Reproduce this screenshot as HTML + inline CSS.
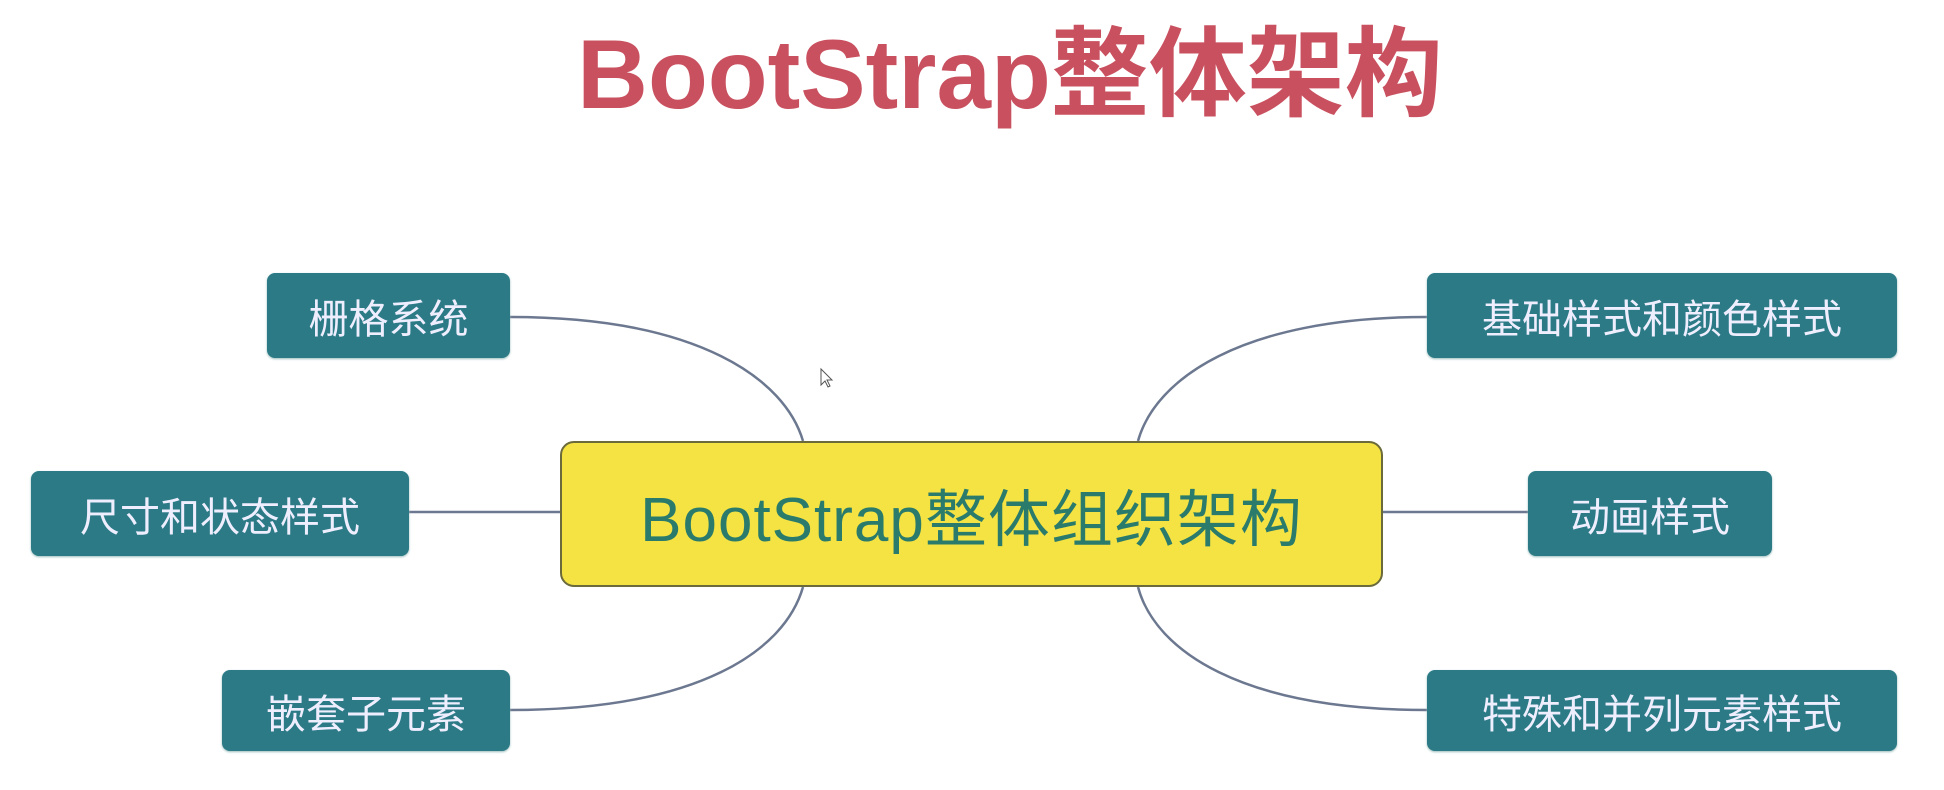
<!DOCTYPE html>
<html><head><meta charset="utf-8"><style>
body{margin:0;width:1944px;height:790px;background:#fff;position:relative;overflow:hidden;font-family:"Liberation Sans","Noto Sans CJK SC",sans-serif}
.t{position:absolute;left:0;width:1944px;top:14px;text-align:center;font-size:98px;font-weight:bold;color:#c9505f;line-height:120px;padding-left:76px;box-sizing:border-box}
.b{position:absolute;background:#2b7a85;color:#eef;border-radius:8px;display:flex;align-items:center;justify-content:center;font-size:40px;box-shadow:0 1px 2px #9bb;font-family:"Noto Sans CJK SC",sans-serif}
.c{position:absolute;left:560px;top:441px;width:823px;height:146px;background:#f5e343;border:2px solid #6b6a3a;border-radius:14px;box-sizing:border-box;display:flex;align-items:center;justify-content:center;font-size:62px;color:#2a7b6b;letter-spacing:1px}
svg{position:absolute;left:0;top:0}
</style></head><body>
<div class="t">BootStrap整体架构</div>
<svg width="1944" height="790"><g fill="none" stroke="#6c7890" stroke-width="2.5">
<path d="M510 317 C700 317 785 380 803 441"/>
<path d="M510 710 C700 710 785 650 803 587"/>
<path d="M1427 317 C1240 317 1155 380 1138 441"/>
<path d="M1427 710 C1240 710 1155 650 1138 587"/>
<path d="M409 512 H560"/><path d="M1383 512 H1528"/></g>
<path d="M821 369 v16 l4-4 3 6 2-1-3-6 5 0z" fill="#fff" stroke="#555" stroke-width="1"/></svg>
<div class="c">BootStrap整体组织架构</div>
<div class="b" style="left:267px;top:273px;width:243px;height:85px">栅格系统</div>
<div class="b" style="left:31px;top:471px;width:378px;height:85px">尺寸和状态样式</div>
<div class="b" style="left:222px;top:670px;width:288px;height:81px">嵌套子元素</div>
<div class="b" style="left:1427px;top:273px;width:470px;height:85px">基础样式和颜色样式</div>
<div class="b" style="left:1528px;top:471px;width:244px;height:85px">动画样式</div>
<div class="b" style="left:1427px;top:670px;width:470px;height:81px">特殊和并列元素样式</div>
</body></html>
